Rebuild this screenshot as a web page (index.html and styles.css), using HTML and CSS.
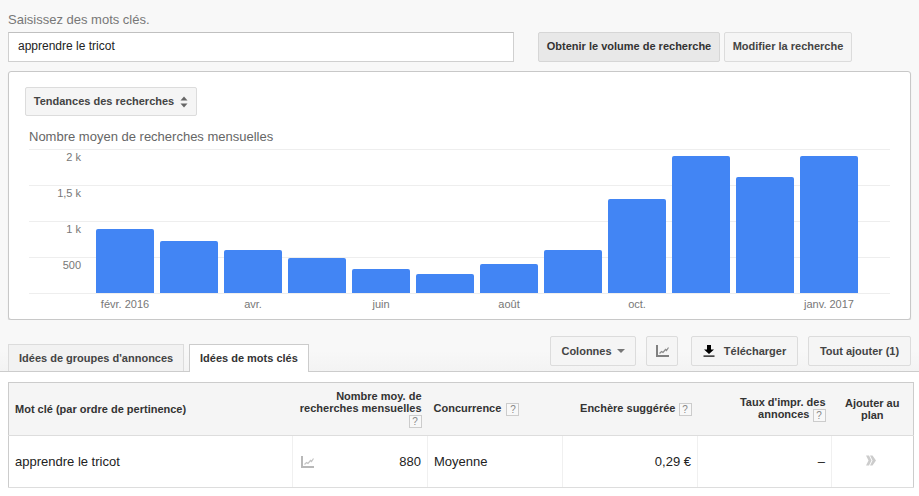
FILE: index.html
```html
<!DOCTYPE html>
<html lang='fr'>
  <head>
    <meta charset='UTF-8'/>
    <title>Planificateur de mots clés</title>
    <link rel="stylesheet" href="styles.css">
  </head>
<body>

<div class="top">
  <div class="label">Saisissez des mots clés.</div>
  <div class="search-row">
    <div class="search-input">apprendre le tricot</div>
    <div class="btn btn-pressed btn-volume">Obtenir le volume de recherche</div>
    <div class="btn btn-modify">Modifier la recherche</div>
  </div>

  <div class="panel">
    <div class="btn btn-trend">Tendances des recherches
      <svg class="updown" width="8" height="12" viewBox="0 0 8 12"><path d="M4 0.5L7.5 4.5H0.5Z M4 11.5L0.5 7.5H7.5Z"/></svg>
    </div>
    <div class="chart-title">Nombre moyen de recherches mensuelles</div>

    <div class="chart">
      <div class="grid-row"><span class="ylabel">2 k</span></div>
      <div class="grid-row"><span class="ylabel">1,5 k</span></div>
      <div class="grid-row"><span class="ylabel">1 k</span></div>
      <div class="grid-row"><span class="ylabel">500</span></div>
      <div class="grid-base"></div>
      <div class="bars">
        <div class="bar" style="height:64px"></div>
        <div class="bar" style="height:52px"></div>
        <div class="bar" style="height:43px"></div>
        <div class="bar" style="height:35px"></div>
        <div class="bar" style="height:24px"></div>
        <div class="bar" style="height:19px"></div>
        <div class="bar" style="height:29px"></div>
        <div class="bar" style="height:43px"></div>
        <div class="bar" style="height:94px"></div>
        <div class="bar" style="height:137px"></div>
        <div class="bar" style="height:116px"></div>
        <div class="bar" style="height:137px"></div>
      </div>
    </div>
    <div class="months">
      <span class="month">févr. 2016</span>
      <span class="month"></span>
      <span class="month">avr.</span>
      <span class="month"></span>
      <span class="month">juin</span>
      <span class="month"></span>
      <span class="month">août</span>
      <span class="month"></span>
      <span class="month">oct.</span>
      <span class="month"></span>
      <span class="month"></span>
      <span class="month">janv. 2017</span>
    </div>
  </div>
</div>

<div class="toolbar">
  <div class="tab tab-groups">Idées de groupes d'annonces</div>
  <div class="tab tab-active">Idées de mots clés</div>
  <div class="tools">
    <div class="btn btn-columns">Colonnes <span class="caret"></span></div>
    <div class="btn btn-icon">
      <svg width="13" height="12" viewBox="0 0 13 12"><path class="axis" d="M1 0V11H13"/><path class="trend" d="M3.5 8.5L5.5 6.5L7 7.5L9.5 4.5L10.5 5.5L12.5 2.5"/></svg>
    </div>
    <div class="btn btn-download">
      <svg width="12" height="12" viewBox="0 0 12 12"><path d="M4 0H8V4.5H11L6 9L1 4.5H4Z"/><rect x="0.5" y="10.5" width="11" height="1.2"/></svg>
      Télécharger
    </div>
    <div class="btn btn-addall">Tout ajouter (1)</div>
  </div>
</div>

<div class="content">
  <table class="results">
    <colgroup>
      <col class="c1"><col class="c2"><col class="c3"><col class="c4"><col class="c5"><col class="c6">
    </colgroup>
    <thead>
      <tr>
        <th class="left">Mot clé (par ordre de pertinence)</th>
        <th class="right">Nombre moy. de<br>recherches mensuelles<br><span class="help">?</span></th>
        <th class="left th-comp">Concurrence <span class="help">?</span></th>
        <th class="right">Enchère suggérée <span class="help">?</span></th>
        <th class="right">Taux d'impr. des<br>annonces <span class="help">?</span></th>
        <th class="center">Ajouter au<br>plan</th>
      </tr>
    </thead>
    <tbody>
      <tr>
        <td>apprendre le tricot</td>
        <td class="right td-volume">
          <svg class="mini" width="13" height="12" viewBox="0 0 13 12"><path class="axis" d="M1 0V11H13"/><path class="trend" d="M3.5 8.5L5.5 6.5L7 7.5L9.5 4.5L10.5 5.5L12.5 2.5"/></svg>
          880
        </td>
        <td class="td-comp">Moyenne</td>
        <td class="right">0,29 €</td>
        <td class="right">–</td>
        <td class="center add">
          <svg width="10" height="11" viewBox="0 0 10 11"><path d="M0 0.5H3L5.5 5.5L3 10.5H0L2.5 5.5Z M4 0.5H6.5L10 5.5L6.5 10.5H4L6.5 5.5Z"/></svg>
        </td>
      </tr>
    </tbody>
  </table>
</div>

</body>
</html>
```

FILE: styles.css
```css
body{
margin: 0;
height: 496px;
overflow: hidden;
font-family: "Liberation Sans", Arial, sans-serif;
background-color: #f8f8f8;
color: #333;
}

.top{
padding: 12px 8px 0 8px;
}
.label{
font-size: 13px;
line-height: 15px;
color: #777;
margin-bottom: 5px;
}
.search-row{
display: flex;
height: 29px;
}
.search-input{
box-sizing: border-box;
width: 506px;
height: 30px;
border: 1px solid #d0d0d0;
border-top-color: #c0c0c0;
background-color: #fff;
color: #222;
font-size: 12px;
line-height: 27px;
padding-left: 9px;
}

.btn{
box-sizing: border-box;
display: flex;
align-items: center;
justify-content: center;
border: 1px solid #dcdcdc;
border-radius: 2px;
background-color: #f5f5f5;
color: #444;
font-size: 11px;
font-weight: bold;
white-space: nowrap;
}
.btn-pressed{
background-color: #e8e8e8;
border-color: #d6d6d6;
color: #333;
}
.btn-volume{
width: 182px;
height: 30px;
margin-left: 24px;
padding-bottom: 2px;
}
.btn-modify{
width: 128px;
height: 30px;
margin-left: 4px;
padding-bottom: 2px;
}

.panel{
box-sizing: border-box;
height: 249px;
margin-top: 10px;
padding: 15px 20px 0 16px;
background-color: #fff;
border: 1px solid #c8c8c8;
border-radius: 3px;
box-shadow: 0 1px 1px rgba(0,0,0,0.15);
}
.btn-trend{
width: 172px;
height: 29px;
gap: 6px;
padding-bottom: 2px;
}
.updown{
fill: #666;
margin-top: 2px;
}
.chart-title{
margin: 13px 0 0 4px;
font-size: 13px;
line-height: 15px;
color: #666;
}

.chart{
position: relative;
margin: 5px 0 0 4px;
}
.grid-row{
box-sizing: border-box;
height: 36px;
border-top: 1px solid #eee;
}
.grid-base{
height: 1px;
background-color: #eee;
}
.ylabel{
display: block;
width: 52px;
text-align: right;
font-size: 11px;
line-height: 14px;
color: #777;
}
.bars{
position: absolute;
left: 67px;
bottom: 1px;
display: flex;
align-items: flex-end;
gap: 6px;
}
.bar{
width: 58px;
background-color: #4285f4;
border-radius: 2px 2px 0 0;
}
.months{
display: flex;
gap: 6px;
margin: 3px 0 0 71px;
}
.month{
flex: 0 0 58px;
white-space: nowrap;
text-align: center;
font-size: 11px;
line-height: 14px;
color: #777;
}

.toolbar{
box-sizing: border-box;
display: flex;
align-items: flex-end;
height: 52px;
padding: 0 8px;
border-bottom: 1px solid #ccc;
background: linear-gradient(#f8f8f8 60%, #f3f3f3);
}
.tab{
box-sizing: border-box;
height: 27px;
padding-left: 10px;
border: 1px solid #dcdcdc;
border-bottom: none;
background-color: #f2f2f2;
color: #444;
font-size: 11px;
font-weight: bold;
line-height: 26px;
}
.tab-groups{
width: 176px;
margin-right: 5px;
}
.tab-active{
width: 120px;
height: 28px;
margin-bottom: -1px;
background-color: #fff;
border-color: #ccc;
color: #333;
}
.tools{
display: flex;
margin-left: auto;
align-self: flex-start;
margin-top: 16px;
}
.tools .btn{
height: 30px;
font-size: 11px;
}
.btn-columns{
width: 86px;
gap: 5px;
}
.caret{
width: 0;
height: 0;
border-left: 4px solid transparent;
border-right: 4px solid transparent;
border-top: 4px solid #777;
}
.btn-icon{
width: 32px;
margin-left: 10px;
}
.btn-download{
width: 107px;
margin-left: 13px;
gap: 9px;
}
.btn-addall{
width: 103px;
margin-left: 10px;
}
.axis{
fill: none;
stroke: #808080;
stroke-width: 2;
}
.trend{
fill: none;
stroke: #8c8c8c;
stroke-width: 1.2;
}
.mini .axis{
stroke: #b8b8b8;
}
.mini .trend{
stroke: #c4c4c4;
}

.content{
height: 124px;
padding: 10px 6px 0 8px;
background-color: #fff;
}
.results{
width: 905px;
border-collapse: collapse;
table-layout: fixed;
border: 1px solid #ccc;
border-bottom: none;
}
.c1{ width: 284px; }
.c2{ width: 135px; }
.c3{ width: 135px; }
.c4{ width: 135px; }
.c5{ width: 134px; }
.c6{ width: 82px; }
th{
height: 52px;
padding: 0 6px;
background-color: #f5f5f5;
border-bottom: 1px solid #ddd;
color: #333;
font-size: 11px;
line-height: 12px;
font-weight: bold;
}
td{
height: 51px;
padding: 0 6px;
border-right: 1px solid #f0f0f0;
border-bottom: 1px solid #ddd;
color: #222;
font-size: 13px;
}
td:last-child{
border-right: none;
}
.left{
text-align: left;
}
.right{
text-align: right;
}
.center{
text-align: center;
}
.help{
display: inline-block;
box-sizing: border-box;
width: 13px;
height: 13px;
border: 1px solid #ccc;
background-color: #f8f8f8;
color: #888;
font-size: 10px;
line-height: 11px;
font-weight: normal;
text-align: center;
vertical-align: middle;
}
.th-comp .help{
margin-left: 2px;
}
.td-volume{
position: relative;
}
.mini{
position: absolute;
left: 8px;
top: 20px;
}
.add{
padding-right: 9px;
}
.add svg{
fill: #ccc;
}
```
